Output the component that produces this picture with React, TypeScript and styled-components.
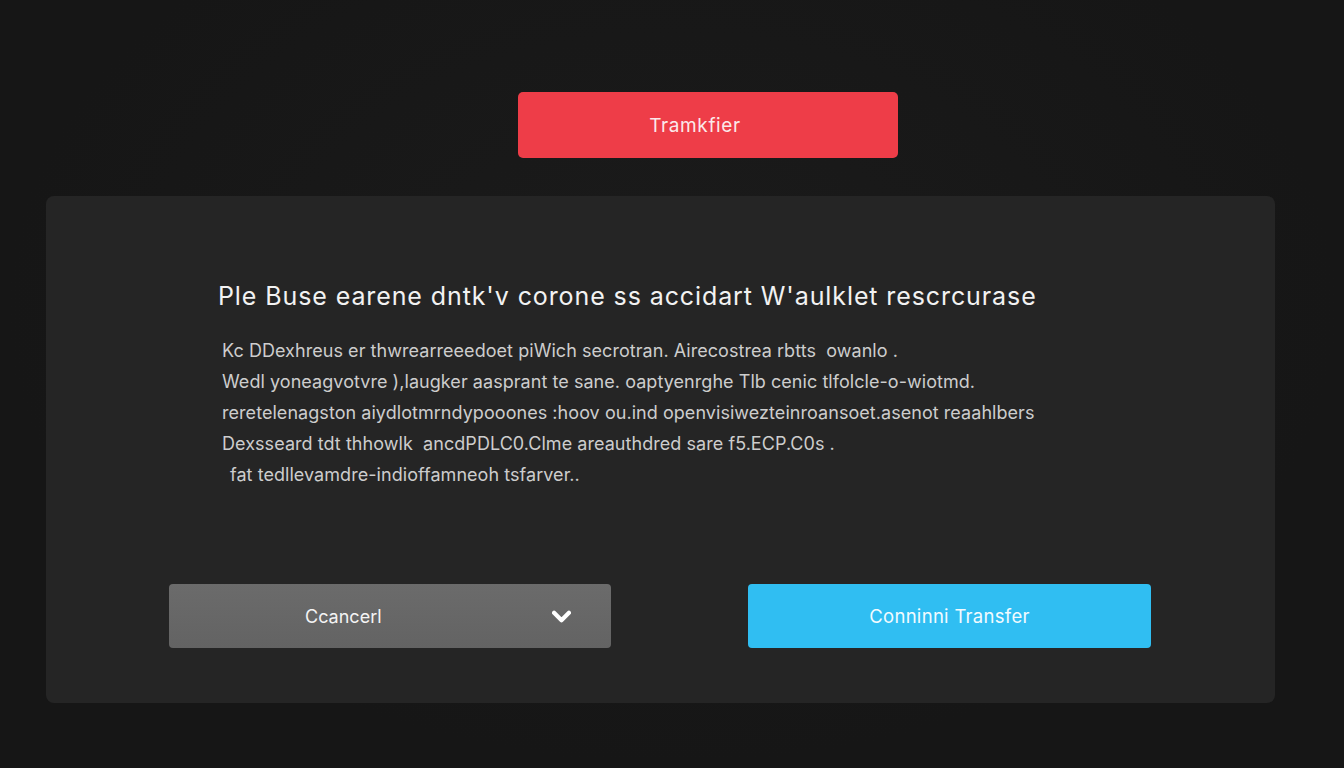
import React from "react";
import styled, { createGlobalStyle } from "styled-components";

const BODY_LINES = [
  "Kc DDexhreus er thwrearreeedoet piWich secrotran. Airecostrea rbtts  owanlo .",
  "Wedl yoneagvotvre ),laugker aasprant te sane. oaptyenrghe Tlb cenic tlfolcle-o-wiotmd.",
  "reretelenagston aiydlotmrndypooones :hoov ou.ind openvisiwezteinroansoet.asenot reaahlbers",
  "Dexsseard tdt thhowlk  ancdPDLC0.Clme areauthdred sare f5.ECP.C0s .",
  "fat tedllevamdre-indioffamneoh tsfarver..",
];

export default function App() {
  return (
    <>
      <GlobalStyle />
      <Page>
        <TopButton>Tramkfier</TopButton>
        <Card>
          <Heading>Ple Buse earene dntk'v corone ss accidart W'aulklet rescrcurase</Heading>
          <Body>
            {BODY_LINES.map((line, i) => (
              <Line key={i} $indent={i === 4}>
                {line}
              </Line>
            ))}
          </Body>
          <Actions>
            <CancelButton>
              <span>Ccancerl</span>
              <Chevron viewBox="0 0 20 14">
                <path d="M2 3 L10 11 L18 3" fill="none" stroke="#fff" strokeWidth="4.5" strokeLinecap="round" strokeLinejoin="round" />
              </Chevron>
            </CancelButton>
            <ConfirmButton>Conninni Transfer</ConfirmButton>
          </Actions>
        </Card>
      </Page>
    </>
  );
}

// --- Styled Components ---

const GlobalStyle = createGlobalStyle`
  html, body {
    margin: 0;
    padding: 0;
    background: #171717;
    font-family: Inter, "Liberation Sans", Arial, sans-serif;
  }
`;

const Page = styled.div`
  width: 1344px;
  height: 768px;
  box-sizing: border-box;
  padding-top: 92px;
  display: flex;
  flex-direction: column;
  align-items: flex-start;
  background: radial-gradient(ellipse at 50% 40%, #1b1b1b 0%, #161616 70%);
`;

const TopButton = styled.button`
  margin-left: 518px;
  width: 380px;
  height: 66px;
  box-sizing: border-box;
  padding-right: 32px;
  border: none;
  border-radius: 5px;
  background: #ee3d48;
  color: #fbe9ea;
  font-family: inherit;
  font-size: 19px;
  letter-spacing: 0.6px;
  font-weight: 400;
`;

const Card = styled.section`
  margin: 38px 0 0 46px;
  width: 1229px;
  height: 507px;
  box-sizing: border-box;
  padding: 84px 0 55px;
  border-radius: 8px;
  background: #252525;
  display: flex;
  flex-direction: column;
`;

const Heading = styled.h1`
  margin: 0 0 0 172px;
  font-size: 25px;
  font-weight: 400;
  line-height: 32px;
  color: #f2f2f2;
  letter-spacing: 0.9px;
  white-space: nowrap;
`;

const Body = styled.div`
  margin: 23px 0 0 176px;
  display: flex;
  flex-direction: column;
`;

const Line = styled.p<{ $indent: boolean }>`
  margin: 0;
  padding-left: ${({ $indent }) => ($indent ? "8px" : "0")};
  font-size: 18px;
  line-height: 31px;
  color: #cdcdcd;
  white-space: pre;
  letter-spacing: 0.05px;
`;

const Actions = styled.div`
  margin-top: auto;
  padding: 0 124px 0 123px;
  display: flex;
  justify-content: space-between;
`;

const CancelButton = styled.button`
  width: 442px;
  height: 64px;
  box-sizing: border-box;
  padding: 0 40px 0 136px;
  border: none;
  border-radius: 4px;
  background: linear-gradient(180deg, #6b6b6b 0%, #636363 100%);
  color: #f4f4f4;
  font-family: inherit;
  font-size: 18px;
  display: flex;
  align-items: center;

  svg {
    margin-left: auto;
  }
`;

const Chevron = styled.svg`
  width: 19px;
  height: 13px;
`;

const ConfirmButton = styled.button`
  width: 403px;
  height: 64px;
  border: none;
  border-radius: 4px;
  background: #30bef2;
  color: #f2fbff;
  font-family: inherit;
  font-size: 18.5px;
  letter-spacing: 0.3px;
`;
